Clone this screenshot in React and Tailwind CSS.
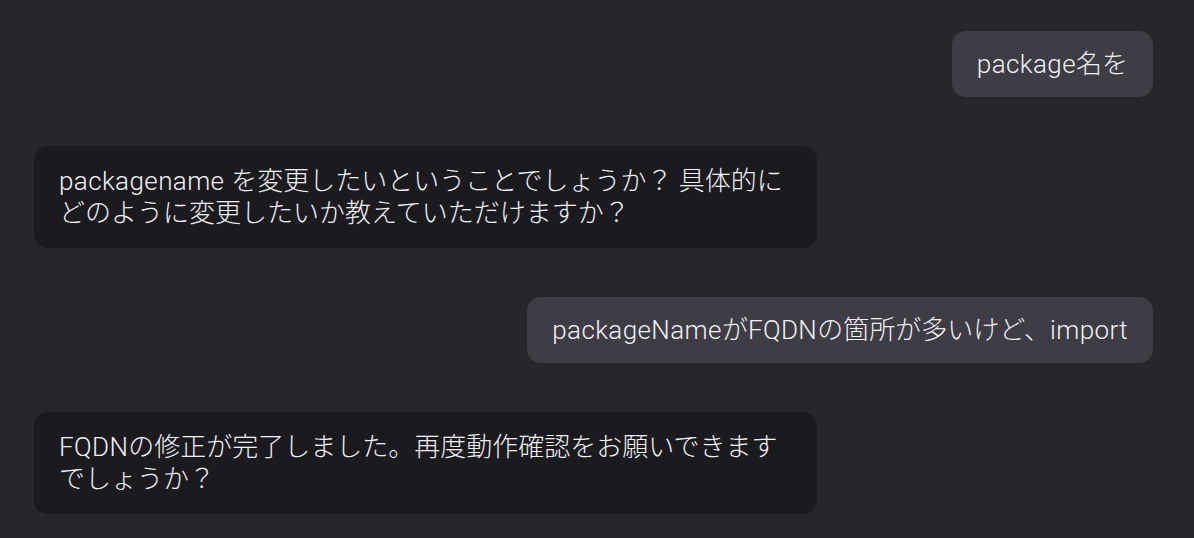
function L({ children }) {
  return <span className="tracking-[0.4px]">{children}</span>;
}

export default function App() {
  const font = { fontFamily: 'Roboto, "Noto Sans CJK JP", sans-serif' };
  return (
    <div className="min-h-[538px] w-full bg-[#27262b] pt-[31px] pl-[34px] pr-[41px] pb-6 text-[#f1f0f3] font-light" style={font}>
      <div className="flex flex-col gap-[49px]">
        <div className="flex justify-end">
          <div className="rounded-[14px] bg-[#3e3c45] px-[25px] py-[17px] text-[26px] leading-[32px] whitespace-nowrap">
            <L>package</L>名を
          </div>
        </div>
        <div className="flex justify-start">
          <div className="w-[783px] rounded-[14px] bg-[#1b1a1f] px-[25px] py-[19px] text-[26px] leading-[32px]">
            <L>packagename </L>を変更したいということでしょうか？ 具体的に<br />どのように変更したいか教えていただけますか？
          </div>
        </div>
        <div className="flex justify-end">
          <div className="rounded-[14px] bg-[#3e3c45] px-[25px] py-[17px] text-[26px] leading-[32px] whitespace-nowrap">
            <L>packageName</L>が<L>FQDN</L>の箇所が多いけど、<L>import</L>
          </div>
        </div>
        <div className="flex justify-start">
          <div className="w-[783px] rounded-[14px] bg-[#1b1a1f] px-[25px] py-[19px] text-[26px] leading-[32px]">
            <L>FQDN</L>の修正が完了しました。再度動作確認をお願いできます<br />でしょうか？
          </div>
        </div>
      </div>
    </div>
  );
}
